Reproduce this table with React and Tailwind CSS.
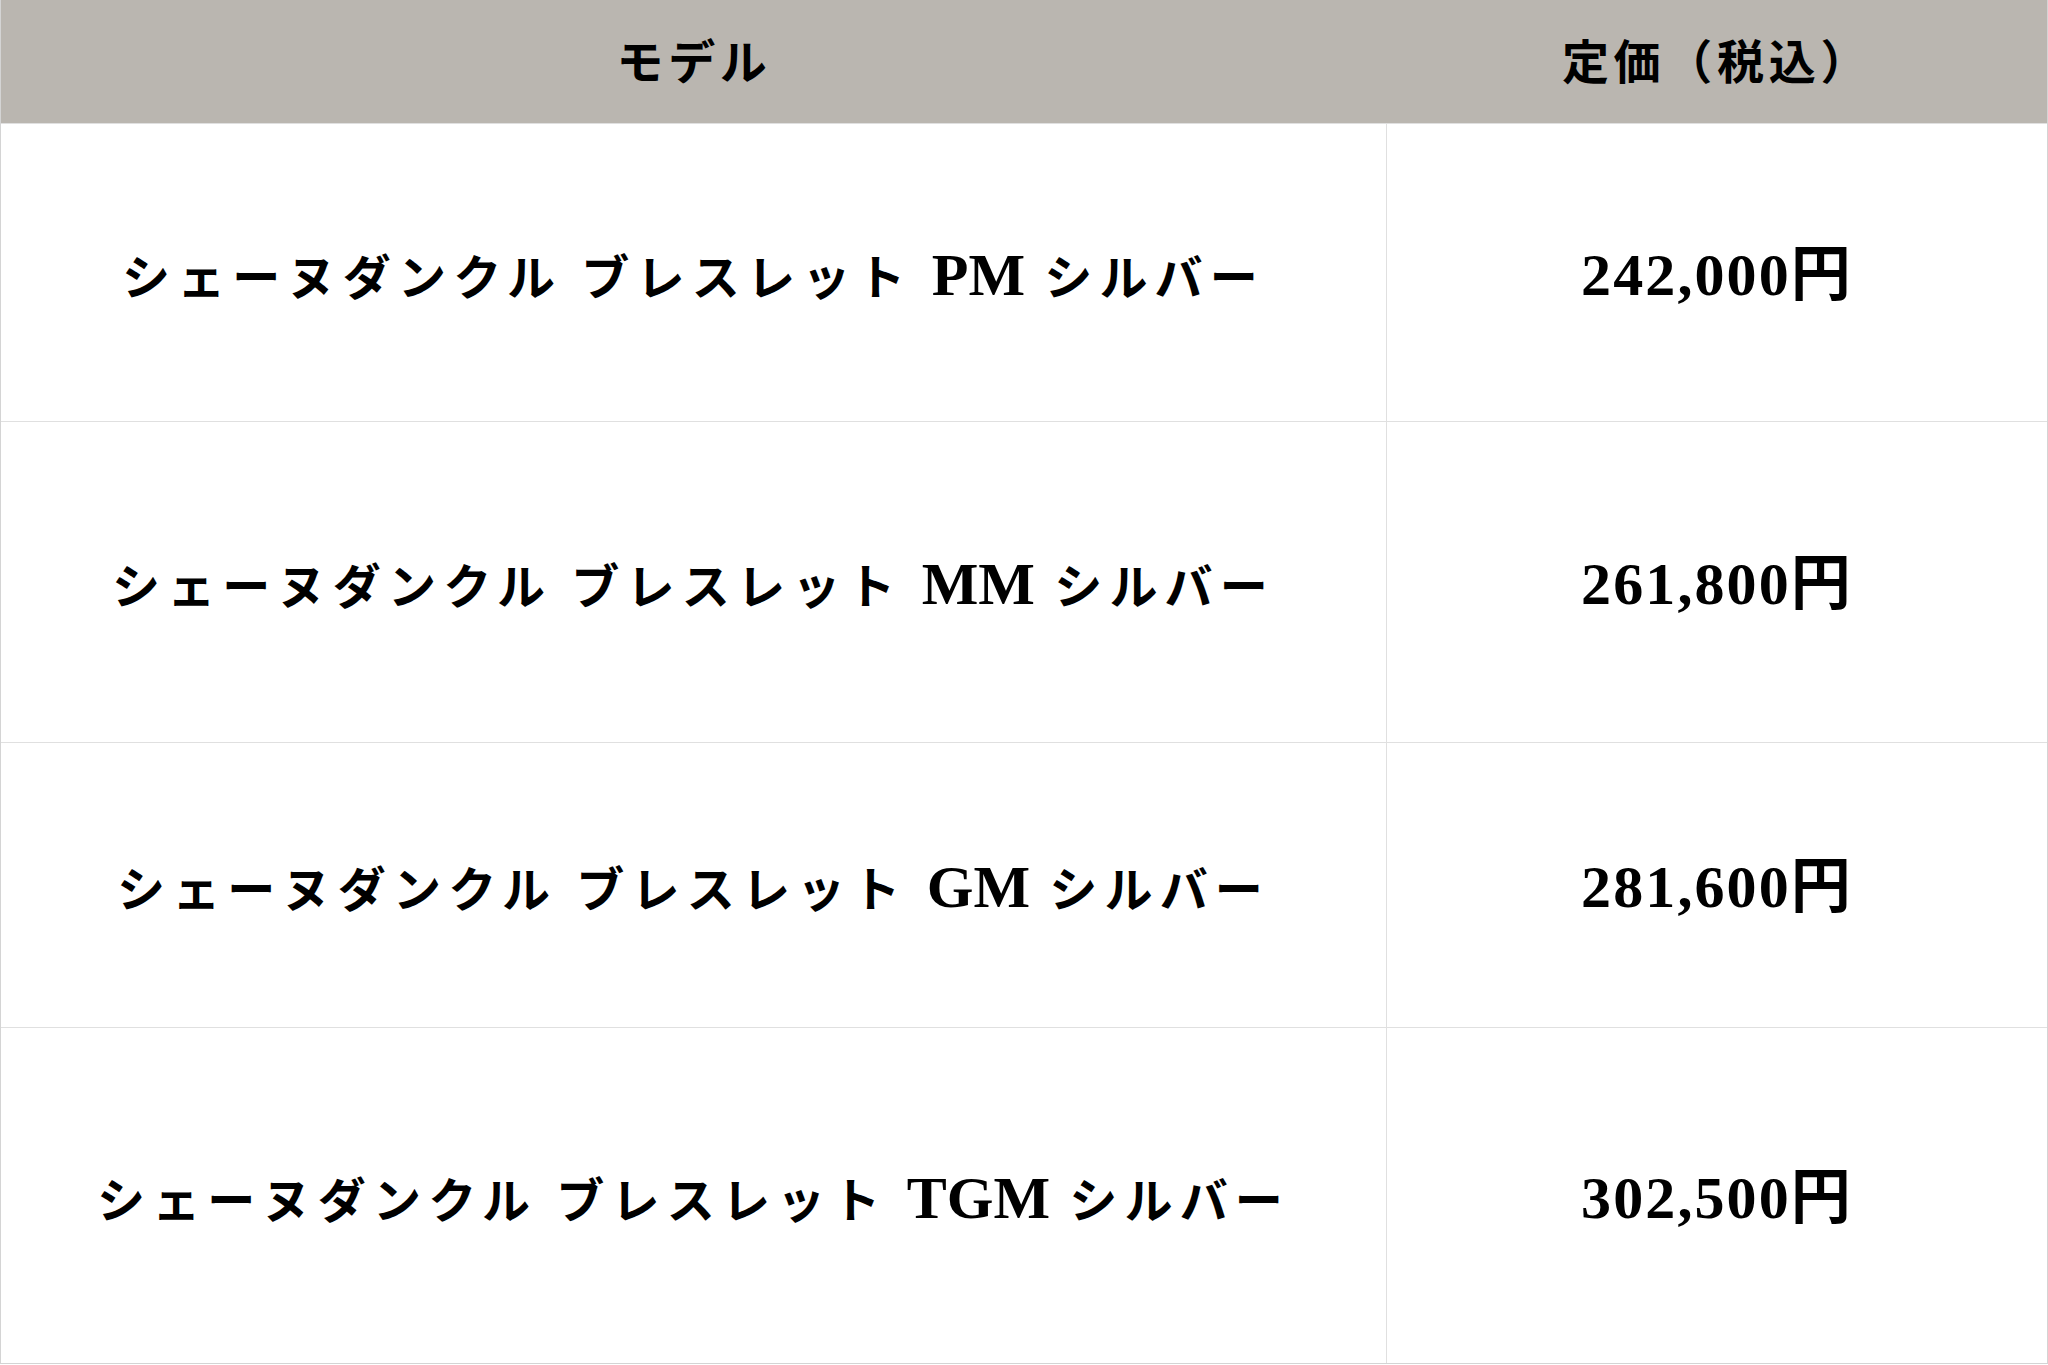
const rows = [
  { name: 'PM', price: '242,000円', h: 'h-[298px]' },
  { name: 'MM', price: '261,800円', h: 'h-[321px]' },
  { name: 'GM', price: '281,600円', h: 'h-[285px]' },
  { name: 'TGM', price: '302,500円', h: 'h-[336px]' },
];

const serif = 'font-["Liberation_Serif","Noto_Sans_CJK_JP",serif]';

export default function App() {
  return (
    <div className={`w-[2048px] h-[1365px] bg-white text-black font-bold ${serif}`}>
      <div className="border border-[#d4d4d4] border-t-0">
        <div className="grid grid-cols-[1386px_1fr] h-[123px] bg-[#bab6b0] items-center pt-1 text-[47px] tracking-[0.1em]">
          <div className="text-center">モデル</div>
          <div className="text-center">定価（税込）</div>
        </div>
        {rows.map((r) => (
          <div key={r.price} className={`grid grid-cols-[1386px_1fr] ${r.h} border-t border-[#e0e0e0]`}>
            <div className="flex items-center justify-center border-r border-[#e0e0e0] pt-1 text-[48px] tracking-[0.15em]">
              <span>
                シェーヌダンクル ブレスレット <span className="text-[60px] tracking-normal">{r.name}</span> シルバー
              </span>
            </div>
            <div className="flex items-center justify-center pt-1 text-[60px] tracking-[0.035em]">
              {r.price}
            </div>
          </div>
        ))}
      </div>
    </div>
  );
}
